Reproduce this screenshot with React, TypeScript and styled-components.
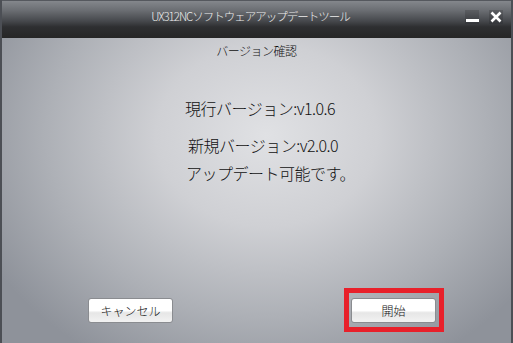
import React, { FC } from 'react';
import styled, { createGlobalStyle } from 'styled-components';

const GlobalStyle = createGlobalStyle`
  html, body {
    margin: 0;
    padding: 0;
    background: #6a6d72;
  }

  body {
    font-family: 'Noto Sans CJK JP', 'Noto Sans', sans-serif;
  }
`;

const Window = styled.div`
  display: flex;
  flex-direction: column;
  box-sizing: border-box;
  width: 513px;
  height: 343px;
  border-left: 2px solid #4c4f55;
  border-right: 2px solid #4c4f55;
  overflow: hidden;
`;

const TitleBar = styled.div`
  position: relative;
  display: flex;
  align-items: center;
  justify-content: center;
  flex: 0 0 38px;
  box-sizing: border-box;
  padding-bottom: 8px;
  border-top: 1px solid #55585e;
  background: linear-gradient(to bottom, #84878c 0%, #6b6e73 25%, #45474b 55%, #2e2f31 70%, #262626 100%);
`;

const TitleText = styled.span`
  margin-right: 12px;
  font-size: 11.5px;
  font-weight: 300;
  line-height: 14px;
  color: #ececec;
  letter-spacing: -1px;
`;

const Controls = styled.div`
  position: absolute;
  top: 9px;
  right: 8px;
  display: flex;
  gap: 10px;
`;

const ControlBtn = styled.div`
  display: flex;
  align-items: center;
  justify-content: center;
  width: 14px;
  height: 14px;
  background: linear-gradient(to bottom, #5c5e62, #34363a);
`;

const Body = styled.div`
  display: flex;
  flex-direction: column;
  flex: 1;
  background: radial-gradient(ellipse 62% 85% at 52% 32%, #e0e1e4 0%, #cfd0d4 35%, #adb0b6 70%, #8e929a 100%);
`;

const Subtitle = styled.div`
  margin-top: 6px;
  text-align: center;
  font-size: 12px;
  font-weight: 300;
  line-height: 14px;
  color: #111;
  letter-spacing: -0.5px;
`;

const InfoBlock = styled.div`
  display: flex;
  flex-direction: column;
  margin-top: 40px;
  padding-left: 183px;
`;

const InfoLine = styled.div<{ $indent?: number; $gap?: number }>`
  margin-top: ${({ $gap }) => $gap ?? 0}px;
  padding-left: ${({ $indent }) => $indent ?? 0}px;
  font-size: 16px;
  font-weight: 300;
  line-height: 20px;
  color: #111;
  letter-spacing: -0.5px;
`;

const ButtonRow = styled.div`
  display: flex;
  align-items: center;
  justify-content: space-between;
  margin-top: auto;
  padding: 0 67px 11px 86px;
`;

const Button = styled.button`
  box-sizing: border-box;
  width: 85px;
  height: 25px;
  padding: 0;
  border: 1px solid #8a8c90;
  border-radius: 3px;
  background: linear-gradient(to bottom, #ffffff 0%, #ffffff 50%, #e6e6e6 60%, #f2f2f2 100%);
  font-family: inherit;
  font-size: 12px;
  font-weight: 300;
  color: #111;
`;

const Highlight = styled.div`
  box-sizing: border-box;
  width: 100px;
  height: 44px;
  padding: 5px 2px;
  border: 5px solid #e8202a;
  display: flex;
  align-items: center;
`;

const App: FC = () => (
  <>
    <GlobalStyle />
    <Window>
      <TitleBar>
        <TitleText>UX312NCソフトウェアアップデートツール</TitleText>
        <Controls>
          <ControlBtn>
            <svg width='13' height='13' viewBox='0 0 13 13'>
              <rect x='0' y='8' width='13' height='3' fill='#fff' />
            </svg>
          </ControlBtn>
          <ControlBtn>
            <svg width='12' height='12' viewBox='0 0 12 12'>
              <path d='M1.5 1.5 L10.5 10.5 M10.5 1.5 L1.5 10.5' stroke='#fff' strokeWidth='2.6' />
            </svg>
          </ControlBtn>
        </Controls>
      </TitleBar>

      <Body>
        <Subtitle>バージョン確認</Subtitle>

        <InfoBlock>
          <InfoLine>現行バージョン:v1.0.6</InfoLine>
          <InfoLine $indent={3} $gap={17}>新規バージョン:v2.0.0</InfoLine>
          <InfoLine $indent={1} $gap={8}>アップデート可能です。</InfoLine>
        </InfoBlock>

        <ButtonRow>
          <Button type='button'>キャンセル</Button>
          <Highlight>
            <Button type='button'>開始</Button>
          </Highlight>
        </ButtonRow>
      </Body>
    </Window>
  </>
);

export default App;
